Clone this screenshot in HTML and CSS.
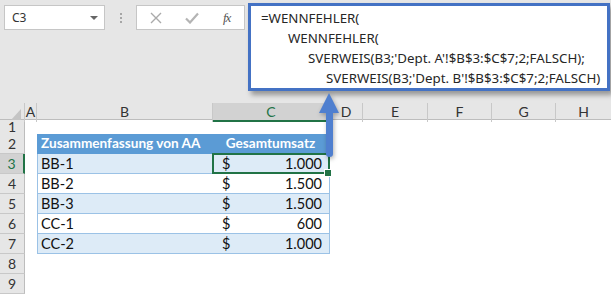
FILE: index.html
```html
<!DOCTYPE html>
<html lang="de">
<head>
  <meta charset="UTF-8">
  <title>WENNFEHLER SVERWEIS</title>
  <link rel="stylesheet" href="styles.css">
</head>
<body>
  <div class="app">
    <!-- Formelleiste -->
    <div class="toolbar">
      <div class="namebox">
        <span>C3</span>
        <span class="caret"></span>
      </div>
      <div class="grip"><i></i><i></i><i></i></div>
      <div class="fxbox">
        <svg class="btn-x" width="12" height="12" viewBox="0 0 12 12"><path d="M1 1L11 11M11 1L1 11" stroke="#aaa" stroke-width="1.4" fill="none"/></svg>
        <svg class="btn-ok" width="14" height="12" viewBox="0 0 14 12"><path d="M1 6.5L5 10.5L13 1.5" stroke="#b4b4b4" stroke-width="2.2" fill="none"/></svg>
        <span class="fx">fx</span>
      </div>
    </div>

    <!-- Tabelle -->
    <div class="sheet">
      <div class="row head-row">
        <div class="corner"></div>
        <div class="colh">A</div>
        <div class="colh">B</div>
        <div class="colh active">C</div>
        <div class="colh">D</div>
        <div class="colh">E</div>
        <div class="colh">F</div>
        <div class="colh">G</div>
        <div class="colh last">H</div>
      </div>
      <div class="row r1">
        <div class="rowh">1</div>
      </div>
      <div class="row">
        <div class="rowh">2</div>
        <div></div>
        <div class="cell th">Zusammenfassung von AA</div>
        <div class="cell th center">Gesamtumsatz</div>
      </div>
      <div class="row">
        <div class="rowh active">3</div>
        <div></div>
        <div class="cell band">BB-1</div>
        <div class="cell band num selected"><span>$</span><span>1.000</span></div>
      </div>
      <div class="row">
        <div class="rowh">4</div>
        <div></div>
        <div class="cell">BB-2</div>
        <div class="cell num"><span>$</span><span>1.500</span></div>
      </div>
      <div class="row">
        <div class="rowh">5</div>
        <div></div>
        <div class="cell band">BB-3</div>
        <div class="cell band num"><span>$</span><span>1.500</span></div>
      </div>
      <div class="row">
        <div class="rowh">6</div>
        <div></div>
        <div class="cell">CC-1</div>
        <div class="cell num"><span>$</span><span>600</span></div>
      </div>
      <div class="row">
        <div class="rowh">7</div>
        <div></div>
        <div class="cell band">CC-2</div>
        <div class="cell band num"><span>$</span><span>1.000</span></div>
      </div>
      <div class="row">
        <div class="rowh">8</div>
      </div>
      <div class="row">
        <div class="rowh">9</div>
      </div>
    </div>

    <!-- Formel-Popup -->
    <div class="formula">
      <div>=WENNFEHLER(</div>
      <div class="in1">WENNFEHLER(</div>
      <div class="in2">SVERWEIS(B3;'Dept. A'!$B$3:$C$7;2;FALSCH);</div>
      <div class="in3">SVERWEIS(B3;'Dept. B'!$B$3:$C$7;2;FALSCH)</div>
    </div>

    <svg class="arrow" width="26" height="70" viewBox="0 0 26 70">
      <path d="M12 1L22 21H16V62Q16 65 12.5 65Q9 65 9 62V21H2Z" fill="#4f7fcf"/>
    </svg>
  </div>
</body>
</html>
```

FILE: styles.css
```css
* { margin:0; padding:0; box-sizing:border-box; }
body { background:#fff; font-family: 'Lato', 'Liberation Sans', sans-serif; }
.app { position:relative; width:611px; height:294px; overflow:hidden; }

/* Formelleiste */
.toolbar { height:103px; background:#e6e6e6; display:flex; align-items:flex-start; padding:5px 0 0 4px; }
.namebox { width:101px; height:25px; background:#fff; border:1px solid #c6c6c6; display:flex; align-items:center; justify-content:space-between; padding:0 6px 0 7px; font-family:'Noto Sans', sans-serif; font-size:12px; color:#333; }
.caret { width:0; height:0; border-left:4px solid transparent; border-right:4px solid transparent; border-top:4px solid #666; }
.grip { width:31px; height:25px; display:flex; flex-direction:column; align-items:center; justify-content:center; gap:2px; }
.grip i { width:2px; height:2px; background:#a6a6a6; }
.fxbox { width:109px; height:25px; background:#fff; border:1px solid #c6c6c6; display:flex; align-items:center; padding:0 0 0 13px; }
.btn-x { margin-right:23px; }
.btn-ok { margin-right:24px; }
.fx { font-family:'Liberation Serif', serif; font-style:italic; font-size:13px; color:#555; letter-spacing:-1px; }

/* Blatt */
.sheet { background:#fff; }
.row { display:grid; grid-template-columns:25px 12px 176px 117px 33px 65px 64px 64px 55px; height:20px; }
.row.r1 { height:14px; }
.head-row { height:17px; background:#e6e6e6; border-bottom:1px solid #bdbdbd; }
.corner { position:relative; border-right:1px solid #c8c8c8; }
.corner::after { content:''; position:absolute; right:3px; bottom:2px; border-left:10px solid transparent; border-bottom:11px solid #c4c4c4; }
.colh { border-right:1px solid #c8c8c8; font-size:14px; color:#333; text-align:center; line-height:17px; }
.colh.last { border-right:none; }
.colh.active { background:#d2d2d2; color:#217346; border-bottom:2px solid #217346; }
.rowh { background:#e6e6e6; border-right:1px solid #bdbdbd; border-bottom:1px solid #c8c8c8; font-size:14px; color:#333; text-align:center; line-height:19px; }
.rowh.active { background:#d2d2d2; color:#217346; border-right:2px solid #217346; }
.r1 .rowh { line-height:14px; }

/* Tabelle */
.cell { font-size:14.5px; color:#111; padding:0 4px 0 3px; line-height:19px; border-bottom:1px solid #9bc2e6; white-space:nowrap; }
.cell:nth-child(3) { border-left:1px solid #9bc2e6; }
.cell:nth-child(4) { border-right:1px solid #9bc2e6; }
.th { background:#5b9bd5; color:#fff; font-weight:bold; font-size:13.6px; border-bottom-color:#5b9bd5; border-left-color:#5b9bd5 !important; border-right-color:#5b9bd5 !important; }
.center { text-align:center; }
.band { background:#ddebf7; }
.num { display:flex; justify-content:space-between; padding:0 7px 0 9px; }
.selected { position:relative; }
.selected::after { content:''; position:absolute; left:-1px; top:-1px; right:-1px; bottom:-1px; border:2px solid #217346; }
.selected::before { content:''; position:absolute; right:-3px; bottom:-4px; width:6px; height:6px; background:#217346; border:1px solid #fff; z-index:1; }

/* Formel-Popup */
.formula { position:absolute; left:248px; top:3px; width:362px; height:88px; background:#fff; border:3px solid #4472c4; box-shadow:3px 4px 5px rgba(0,0,0,0.35); padding:2px 0 0 10px; font-family:'Noto Sans', sans-serif; font-size:13.3px; line-height:20px; color:#262626; white-space:nowrap; }
.formula .in1 { padding-left:27px; }
.formula .in2 { padding-left:47px; }
.formula .in3 { padding-left:65px; }

.arrow { position:absolute; left:317px; top:92px; filter:drop-shadow(1px 2px 2px rgba(0,0,0,0.3)); }
```
